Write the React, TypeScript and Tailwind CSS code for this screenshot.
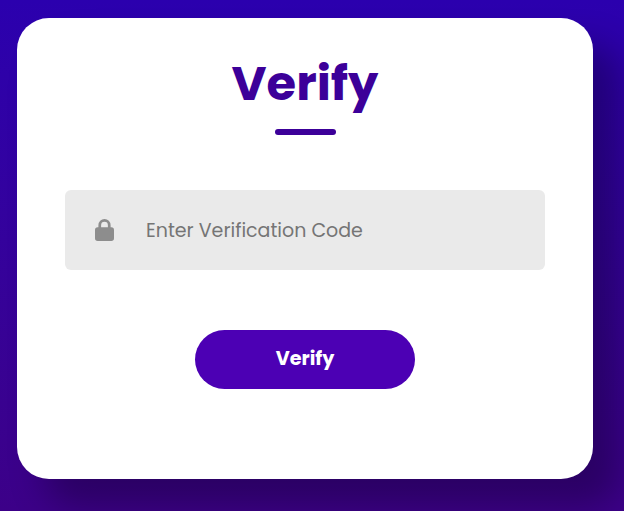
import React from "react";

export default function App() {
  return (
    <main className="h-[511px] w-[624px] overflow-hidden bg-linear-to-b from-[#2b00ae] to-[#3c0088] pl-[17px] pt-[18px] font-['Poppins','Open_Sans',sans-serif]">
      <section className="flex h-[461px] w-[576px] flex-col items-center rounded-[32px] bg-white px-12 pt-[36px] shadow-[27px_27px_35px_rgba(0,0,0,0.28)]">
        <h1 className="flex h-[60px] items-center text-[48px] font-bold leading-[60px] text-[#3c0099]">
          Verify
        </h1>
        <span className="mt-[15px] h-[6px] w-[61px] rounded-full bg-[#3c0099]" />
        <label className="mt-[55px] flex h-20 w-[480px] items-center rounded-[6px] bg-[#eaeaea] pl-[30px]">
          <svg width="19" height="22" viewBox="0 0 448 512" preserveAspectRatio="none" fill="#8d8d8d">
            <path d="M144 144v48h160v-48a80 80 0 0 0-160 0zm-64 48v-48a144 144 0 0 1 288 0v48h16a64 64 0 0 1 64 64v192a64 64 0 0 1-64 64H64a64 64 0 0 1-64-64V256a64 64 0 0 1 64-64z" />
          </svg>
          <input
            placeholder="Enter Verification Code"
            className="ml-8 mt-[2px] w-[360px] bg-transparent text-[19px] leading-7 outline-none placeholder:text-[#757575]"
          />
        </label>
        <button className="mt-[60px] flex h-[59px] w-[220px] items-center justify-center rounded-full bg-[#4c00b4] pb-px text-[19.2px] font-bold text-white">
          Verify
        </button>
      </section>
    </main>
  );
}
